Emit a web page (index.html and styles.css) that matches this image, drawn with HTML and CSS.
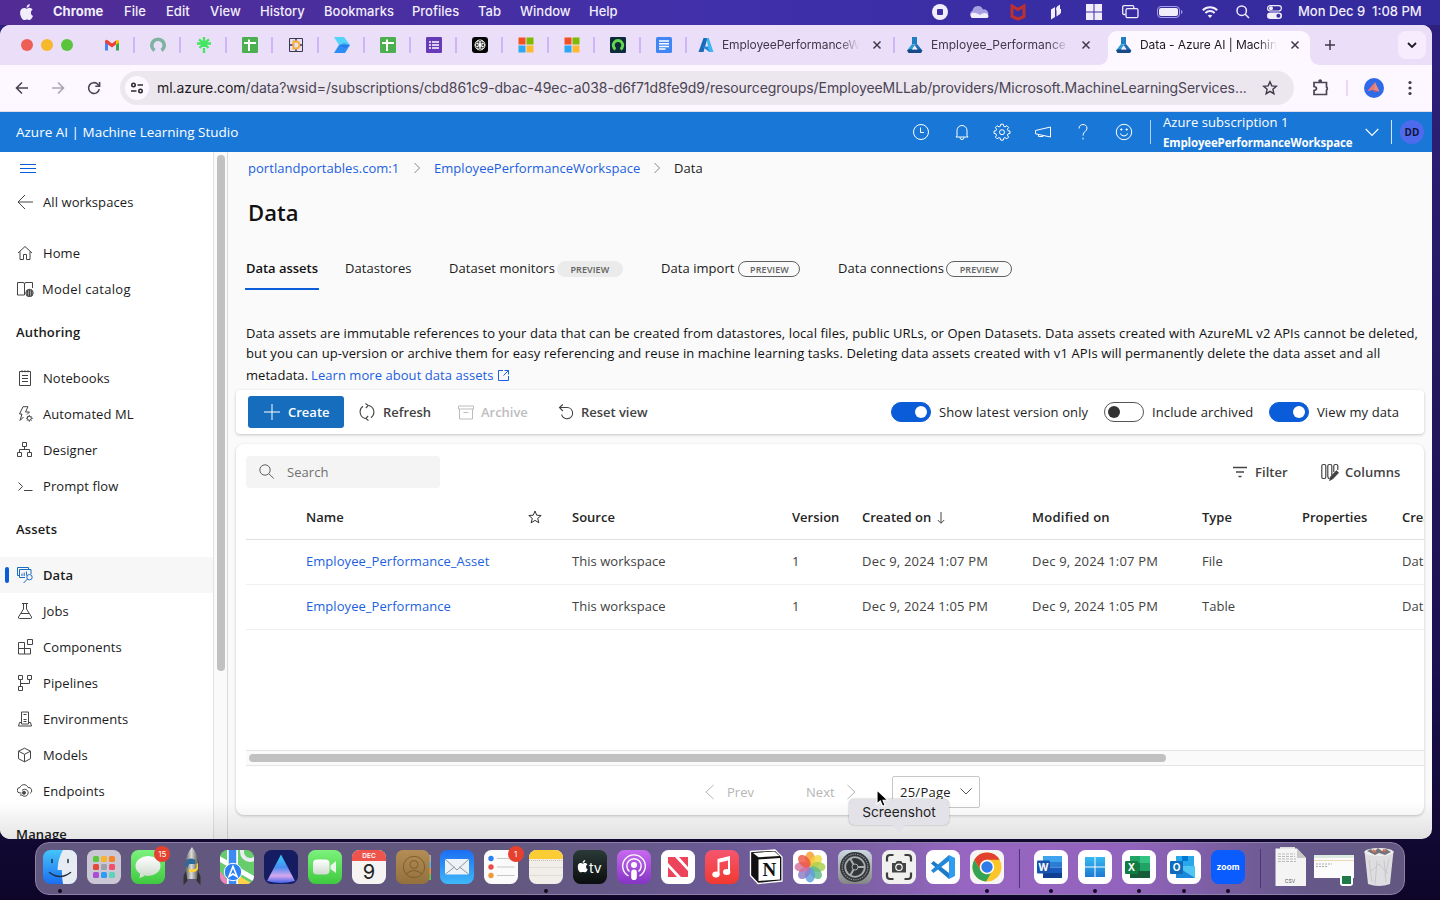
FILE: index.html
```html
<!DOCTYPE html>
<html lang="en">
<head>
<meta charset="utf-8">
<title>Data - Azure AI | Machine Learning Studio</title>
<link rel="stylesheet" href="styles.css">
</head>
<body>
<svg class="defs" width="0" height="0">
  <defs>
    <linearGradient id="gSky" x1="0" y1="0" x2="0" y2="1"><stop offset="0" stop-color="#1b6ef3"/><stop offset="1" stop-color="#3fb8f9"/></linearGradient>
    <linearGradient id="gFinder" x1="0" y1="0" x2="0" y2="1"><stop offset="0" stop-color="#45c4fb"/><stop offset="1" stop-color="#1b6ef0"/></linearGradient>
    <linearGradient id="gGreen" x1="0" y1="0" x2="0" y2="1"><stop offset="0" stop-color="#7cf27c"/><stop offset="1" stop-color="#3fc93f"/></linearGradient>
    <linearGradient id="gPod" x1="0" y1="0" x2="0" y2="1"><stop offset="0" stop-color="#c86af0"/><stop offset="1" stop-color="#8534c4"/></linearGradient>
    <linearGradient id="gMusic" x1="0" y1="0" x2="0" y2="1"><stop offset="0" stop-color="#f5566f"/><stop offset="1" stop-color="#f1392f"/></linearGradient>
    <linearGradient id="gTv" x1="0" y1="0" x2="0" y2="1"><stop offset="0" stop-color="#2a3a37"/><stop offset="1" stop-color="#0a0d0d"/></linearGradient>
    <linearGradient id="gNova" x1="0" y1="0" x2="0" y2="1"><stop offset="0" stop-color="#2fd0fb"/><stop offset=".45" stop-color="#4a8cf2"/><stop offset=".75" stop-color="#d9a8ee"/><stop offset="1" stop-color="#3e62e8"/></linearGradient>
    <linearGradient id="gWhite" x1="0" y1="0" x2="0" y2="1"><stop offset="0" stop-color="#fff"/><stop offset="1" stop-color="#cfdccf"/></linearGradient>
    <linearGradient id="gSettings" x1="0" y1="0" x2="0" y2="1"><stop offset="0" stop-color="#cdd8e2"/><stop offset="1" stop-color="#858585"/></linearGradient>
    <linearGradient id="gBrown" x1="0" y1="0" x2="0" y2="1"><stop offset="0" stop-color="#b38d55"/><stop offset="1" stop-color="#93703c"/></linearGradient>
    <linearGradient id="gRocket" x1="0" y1="0" x2="1" y2="0"><stop offset="0" stop-color="#555"/><stop offset=".45" stop-color="#ddd"/><stop offset="1" stop-color="#444"/></linearGradient>
    <linearGradient id="gAz" x1="0" y1="0" x2="0" y2="1"><stop offset="0" stop-color="#37b9f1"/><stop offset="1" stop-color="#1b7ad3"/></linearGradient>
    <symbol id="apple" viewBox="0 0 14 16"><path d="M9.3 2.7C9.9 2 10.2 1 10.1 0 9.200.1 8.200.6 7.600 1.300 7.100 1.900 6.700 2.900 6.800 3.800 7.800 3.900 8.700 3.400 9.300 2.700ZM10.100 4c-1.300-.1-2.400.8-3.100.8S5.300 4.100 4.200 4.100C2.800 4.100 1.500 4.900.8 6.200c-1.500 2.600-.4 6.400 1 8.400.7 1 1.500 2.100 2.600 2 1-.04 1.400-.7 2.700-.7s1.600.7 2.700.6 1.800-1 2.500-2c.8-1.100 1.100-2.200 1.100-2.300-.02 0-2.200-.8-2.200-3.300 0-2.100 1.700-3 1.800-3.100C12.100 4.300 10.600 4 10.100 4Z" transform="scale(.97)"/></symbol>
    <symbol id="sheet" viewBox="0 0 16 16"><rect width="16" height="16" rx="1.300" fill="#4caf50"/><path d="M7 2.500v11.500M2 6h12" stroke="#fff" stroke-width="2"/></symbol>
    <symbol id="ms" viewBox="0 0 16 16"><path fill="#f25022" d="M.5.5h7v7h-7z"/><path fill="#7fba00" d="M8.500.5h7v7h-7z"/><path fill="#2fa8f2" d="M.5 8.500h7v7h-7z"/><path fill="#ffb92e" d="M8.500 8.500h7v7h-7z"/></symbol>
    <symbol id="flask" viewBox="0 0 16 16"><path d="M5 0h5v7.500H5z" fill="#1f7fc0"/><path d="M5 7l2.800 1.200L3.300 15.500 0 13.500z" fill="#2c9fd8"/><path d="M10 7l5 6-2 2.500L7.300 8z" fill="#1a6fb5"/><path d="M0 13.500 2.500 12.300h10L15.500 13.500 14 16H1.500z" fill="#174a86"/><path d="M7.600 8.800 5 12.600h5.600z" fill="#f3eafa"/></symbol>
    <symbol id="x" viewBox="0 0 10 10"><path d="M1.500 1.500l7 7m0-7l-7 7" stroke="#40394a" stroke-width="1.500" fill="none"/></symbol>
    <symbol id="chev" viewBox="0 0 8 12"><path d="M1.500 1l5 5-5 5" fill="none" stroke="currentColor"/></symbol>
  </defs>
</svg>

<header class="menubar">
  <nav class="menus">
    <svg class="apple-logo" width="14" height="16"><use href="#apple"/></svg>
    <b>Chrome</b><span>File</span><span>Edit</span><span>View</span><span>History</span><span>Bookmarks</span><span>Profiles</span><span>Tab</span><span>Window</span><span>Help</span>
  </nav>
  <div class="status">
    <svg width="16" height="16"><circle cx="8" cy="8" r="8" fill="#f1edfa"/><rect x="5" y="5" width="6" height="6" rx="1" fill="#3c30a4"/></svg>
    <svg width="20" height="14"><path d="M4 13a4 4 0 0 1-.5-7.500A5.500 5.500 0 0 1 14 4.500 4.300 4.300 0 0 1 16 13z" fill="#a69fe0"/><path d="M3 13a3 3 0 0 1 0-5c3-1 6 .5 8 2 2-2 5-3 7.500-1 1.800 2 1 4-1 4z" fill="#f1edfa"/></svg>
    <svg width="16" height="17"><path d="M2 2l6 3.500L14 2v10.500L8 15l-6-2.500z" fill="none" stroke="#bd3030" stroke-width="3"/></svg>
    <svg width="12" height="16"><path d="M1 5.500 5 3v10l-4 2.500zM6.500 3 10 .5V10l-3.500 2.500z" fill="#f1edfa"/><path d="M6 4l5 1v4l-3 2" fill="#f1edfa"/></svg>
    <svg width="16" height="16"><path d="M0 0h7.500v7.500H0zM8.500 0H16v7.500H8.500zM0 8.500h7.500V16H0zM8.500 8.500H16V16H8.500z" fill="#f1edfa"/></svg>
    <svg width="17" height="14" fill="none" stroke="#f1edfa" stroke-width="1.300"><path d="M3.500 9.500H2A1.300 1.300 0 0 1 .7 8.200V2A1.300 1.300 0 0 1 2 .7h8.500A1.300 1.300 0 0 1 11.800 2v1"/><rect x="4" y="3.700" width="12" height="9" rx="1.500"/></svg>
    <svg width="26" height="12"><rect x=".5" y=".5" width="22" height="11" rx="3.500" fill="none" stroke="#a69fe0"/><rect x="2" y="2" width="19" height="8" rx="2" fill="#f1edfa"/><path d="M24 4v4q1.500-.5 1.500-2T24 4" fill="#a69fe0"/></svg>
    <svg width="16" height="12" fill="none" stroke="#f1edfa" stroke-width="2"><path d="M.8 4.300a10.200 10.200 0 0 1 14.400 0M3.400 7a6.500 6.500 0 0 1 9.200 0"/><path d="M8 12 5.700 9.600q2.300-1.800 4.600 0z" fill="#f1edfa" stroke="none"/></svg>
    <svg width="14" height="14" fill="none" stroke="#f1edfa" stroke-width="1.500"><circle cx="5.700" cy="5.700" r="4.700"/><path d="M9.200 9.200 13 13"/></svg>
    <svg width="15" height="14"><rect x=".6" y=".6" width="13.800" height="5.400" rx="2.700" fill="none" stroke="#f1edfa" stroke-width="1.200"/><circle cx="4" cy="3.300" r="2" fill="#f1edfa"/><rect y="7.500" width="15" height="6.500" rx="3.200" fill="#f1edfa"/><circle cx="11.400" cy="10.700" r="2" fill="#3b2fa2"/></svg>
    <span class="clock">Mon Dec 9&nbsp; 1:08 PM</span>
  </div>
</header>

<div class="window">
  <div class="tabstrip">
    <div class="lights"><i class="red"></i><i class="amber"></i><i class="green"></i></div>
    <div class="pins">
      <span><svg width="16" height="16" viewBox="0 0 16 16"><path d="M1 5v8.500h3V6z" fill="#4285f4"/><path d="M12 6v7.500h3V5z" fill="#34a853"/><path d="M1 4.500Q1.500 1.500 4 3.500L8 6.500 12 3.500V7.500L8 10.500 1 5.500z" fill="#ea4335"/><path d="M12 3.500q2.500-2 3 1v1.300L12 8z" fill="#fbbc04"/></svg></span>
      <span><svg width="16" height="16" viewBox="0 0 16 16"><path d="M4.500 13.500A6.200 6.200 0 1 1 11.500 13.500" fill="none" stroke="#7fb3a1" stroke-width="3.600"/></svg></span>
      <span><svg width="16" height="16" viewBox="0 0 16 16"><path d="M8 0v10M3 2.300 8 6.500l5-4.200M1 6.500h14M3.500 11 8 6.500l4.500 4.500M8 11v5" fill="none" stroke="#43e660" stroke-width="2.300"/></svg></span>
      <span><svg width="16" height="16"><use href="#sheet"/></svg></span>
      <span><svg width="16" height="16" viewBox="0 0 16 16"><path d="M1.500 1.500h13v13h-13z" fill="none" stroke="#38384e"/><path d="M5.500 4.500h2.500a3.500 3.500 0 0 1 0 7H5.500z" fill="none" stroke="#f8ae2b" stroke-width="2"/><path d="M8 1v2.500m0 9V15M1 8h3.500m7.500 0h3" stroke="#38384e" stroke-width="1.500"/></svg></span>
      <span><svg width="16" height="16" viewBox="0 0 16 16"><path d="M0 0h10l6 8H5z" fill="#54d3fb"/><path d="M5 8h11l-5 8H0z" fill="#2d8cf5"/><path d="M5 8 10 6l6 2-5 3z" fill="#1d66e8" opacity=".5"/></svg></span>
      <span><svg width="16" height="16"><use href="#sheet"/></svg></span>
      <span><svg width="16" height="16" viewBox="0 0 16 16"><rect width="16" height="16" rx="1.300" fill="#673ab7"/><path d="M3 5h2m1 0h7M3 8h2m1 0h7M3 11h2m1 0h7" stroke="#fff" stroke-width="1.700"/></svg></span>
      <span><svg width="16" height="16" viewBox="0 0 16 16"><rect width="16" height="16" rx="3" fill="#050505"/><g fill="none" stroke="#fff" stroke-width=".8"><ellipse cx="8" cy="5.500" rx="3" ry="2.700"/><ellipse cx="8" cy="5.500" rx="3" ry="2.700" transform="rotate(60 8 8)"/><ellipse cx="8" cy="5.500" rx="3" ry="2.700" transform="rotate(120 8 8)"/><ellipse cx="8" cy="5.500" rx="3" ry="2.700" transform="rotate(180 8 8)"/><ellipse cx="8" cy="5.500" rx="3" ry="2.700" transform="rotate(240 8 8)"/><ellipse cx="8" cy="5.500" rx="3" ry="2.700" transform="rotate(300 8 8)"/></g></svg></span>
      <span><svg width="16" height="16"><use href="#ms"/></svg></span>
      <span><svg width="16" height="16"><use href="#ms"/></svg></span>
      <span><svg width="16" height="16" viewBox="0 0 16 16"><rect width="16" height="16" rx="1.300" fill="#0d2b3a"/><path d="M5.500 12.200A4.700 4.700 0 1 1 10.500 12.200" fill="none" stroke="#62d84e" stroke-width="2.900"/></svg></span>
      <span><svg width="16" height="16" viewBox="0 0 16 16"><rect width="16" height="16" rx="1.500" fill="#4285f4"/><path d="M3 4h10M3 6.700h10M3 9.400h10M3 12h6.500" stroke="#fff" stroke-width="1.500"/></svg></span>
    </div>
    <div class="tab t1"><svg width="16" height="16" viewBox="0 0 16 16"><path d="M5.500 1h4L5.500 15H.5z" fill="#176bb8"/><path d="M8.500 1h2.200L15.500 15H11z" fill="#3bb7ef"/><path d="M4 9.500h6l1.500 5.500z" fill="#2485d8"/></svg><span>EmployeePerformanceW</span><svg width="10" height="10"><use href="#x"/></svg></div>
    <div class="tab t2"><svg width="16" height="16"><use href="#flask"/></svg><span>Employee_Performance</span><svg width="10" height="10"><use href="#x"/></svg></div>
    <div class="tab active"><svg width="16" height="16"><use href="#flask"/></svg><span>Data - Azure AI | Machin</span><svg width="10" height="10"><use href="#x"/></svg></div>
    <svg class="plus" width="12" height="12"><path d="M6 1v10M1 6h10" stroke="#40394a" stroke-width="1.500"/></svg>
    <div class="tabmenu"><svg width="10" height="6"><path d="M1 1l4 4 4-4" fill="none" stroke="#1d1b20" stroke-width="1.800"/></svg></div>
  </div>

  <div class="addressbar">
    <svg class="nav-back" width="14" height="14" fill="none" stroke="#4a4453" stroke-width="1.600"><path d="M13 7H2M7 1.500 1.500 7 7 12.500"/></svg>
    <svg class="nav-fwd" width="14" height="14" fill="none" stroke="#aaa5b0" stroke-width="1.600"><path d="M1 7h11M7 1.500 12.500 7 7 12.500"/></svg>
    <svg class="nav-reload" width="14" height="14" fill="none" stroke="#4a4453" stroke-width="1.600"><path d="M12.300 8.200A5.400 5.400 0 1 1 10.800 3.200L12.500 5"/><path d="M12.600 1v4.300H8.300"/></svg>
    <div class="url">
      <span class="siteinfo"><svg width="14" height="12" fill="none" stroke="#2c2931" stroke-width="1.600"><circle cx="3.500" cy="3" r="1.700"/><path d="M7.500 3H13M1 9h5.500"/><circle cx="10.500" cy="9" r="1.700"/></svg></span>
      <span class="address"><em>ml.azure.com</em>/data?wsid=/subscriptions/cbd861c9-dbac-49ec-a038-d6f71d8fe9d9/resourcegroups/EmployeeMLLab/providers/Microsoft.MachineLearningServices...</span>
      <svg class="bookmark" width="16" height="16" fill="none" stroke="#40394a" stroke-width="1.400"><path d="M8 1.800l1.800 4.100 4.500.4-3.400 3 1 4.400L8 11.400l-3.900 2.300 1-4.400-3.400-3 4.500-.4z"/></svg>
    </div>
    <svg class="ext" width="18" height="18" fill="none" stroke="#4a4453" stroke-width="1.700"><path d="M2 3.500h12.500V8a2 2 0 0 1 0 3.200v4.300H2v-4q2.500-.5 2.500-2T2 7.500z"/><circle cx="8.200" cy="2" r="1" fill="#4a4453"/></svg>
    <i class="vbar"></i>
    <svg class="avatar" width="20" height="20"><circle cx="10" cy="10" r="10" fill="#2f6ae8"/><path d="M11 4 9 12 3.500 13z" fill="#f2756f"/><path d="M11 4 15.500 13.500 9 12z" fill="#e88a80"/><path d="M9 12l6.500 1.500-5.500.5z" fill="#c95a66"/></svg>
    <svg class="kebab" width="4" height="16" fill="#40394a"><circle cx="2" cy="2.500" r="1.600"/><circle cx="2" cy="8" r="1.600"/><circle cx="2" cy="13.500" r="1.600"/></svg>
  </div>

  <div class="azure-header">
    <span class="brand">Azure AI | Machine Learning Studio</span>
    <div class="tools">
      <svg width="18" height="18"><circle cx="9" cy="9" r="7.500"/><path d="M8.500 4.500v5H12"/></svg>
      <svg width="18" height="18"><path d="M4 12.500V7.500a5 5 0 0 1 10 0v5l1 1.500H3zM7 14.500a2 2 0 0 0 4 0"/></svg>
      <svg width="18" height="18"><path d="M7.800 1.200h2.400l.5 2.100 1.300.6 1.900-1.200 1.700 1.700-1.200 1.900.6 1.400 2 .4v2.300l-2 .5-.6 1.300 1.200 1.900-1.700 1.700-1.900-1.200-1.300.6-.5 2H7.800l-.5-2-1.300-.6-1.900 1.200-1.700-1.700 1.200-1.900-.6-1.300-2-.5V8.100l2-.4.6-1.400L2.400 4.400l1.700-1.700L6 3.900l1.300-.6z"/><circle cx="9" cy="9.200" r="2.500"/></svg>
      <svg width="18" height="18"><path d="M1.500 7.500 16.500 4v10L1.500 10.800zM4.500 11.500v2h4.500v-1"/></svg>
      <svg width="18" height="18"><path d="M5 5.500C5 3 6.800 1.500 9 1.500s4 1.500 4 3.600C13 8.500 9 8.500 9 12.500M9 14.700V16.500"/></svg>
      <svg width="18" height="18"><circle cx="9" cy="9" r="7.700"/><path d="M5 10.500q4 5 8 0"/><circle cx="6.300" cy="6.500" r=".7" fill="#fff"/><circle cx="11.700" cy="6.500" r=".7" fill="#fff"/></svg>
    </div>
    <div class="workspace"><span>Azure subscription 1</span><b>EmployeePerformanceWorkspace</b></div>
    <svg class="ws-chev" width="14" height="9" fill="none" stroke="#fff" stroke-width="1.100"><path d="M.7 1 7 7.500 13.300 1"/></svg>
    <div class="user"><span>DD</span></div>
  </div>

  <div class="body">
    <aside class="sidebar">
      <svg class="burger" width="16" height="11"><path d="M0 1.500h16M0 5.500h16M0 9.500h16" stroke="#0b5cd8"/></svg>
      <a class="item"><svg viewBox="0 0 16 16"><path d="M16 8H1M8 1 1 8l7 7"/></svg>All workspaces</a>
      <div class="gap"></div>
      <a class="item"><svg viewBox="0 0 16 16"><path d="M1 8 8 1.500 15 8M3 6.500V14.500H6.500V9.500h3v5H13V6.500"/></svg>Home</a>
      <a class="item catalog"><svg viewBox="0 0 17 16"><path d="M7.500 14H.5V1.500H6q1.500 0 1.500 1.500 0-1.500 1.500-1.500h6.500V7M7.500 3v11"/><circle cx="12.500" cy="12" r="3.700"/><path d="M8.800 12h7.400M12.500 8.300v7.400M11 8.500q-1.500 3.500 0 7M14 8.500q1.500 3.500 0 7M9.500 10h6M9.500 14h6"/></svg>Model catalog</a>
      <h4>Authoring</h4>
      <a class="item"><svg viewBox="0 0 16 16"><path d="M2.500 1.500h11v14h-11zM5 .3v2M8 .3v2M11 .3v2M5 5.500h6M5 8.500h6M5 11.500h6"/></svg>Notebooks</a>
      <a class="item"><svg viewBox="0 0 16 16"><path d="M6 .7h5L8.500 6h4L10 8.500M6 .7 2.500 8H5l-2 6.500 3.500-3.500"/><circle cx="12.300" cy="12.300" r="2"/><path d="M12.300 9v1.300m0 4v1.500M9 12.300h1.300m4 0h1.500M10 10l.8.800m3 3 .8.800m0-4.600-.8.800m-3 3-.8.800"/></svg>Automated ML</a>
      <a class="item"><svg viewBox="0 0 16 16"><path d="M5.500.5h4v4h-4zM.5 10.500h4v4h-4zM10.500 10.500h4v4h-4zM7.500 4.500v3M2.500 10.500v-3h10v3"/></svg>Designer</a>
      <a class="item"><svg viewBox="0 0 16 16"><path d="M1.500 4.500l4 4-4 4M7 12.500h8.500"/></svg>Prompt flow</a>
      <h4>Assets</h4>
      <a class="item current"><svg viewBox="0 0 16 16"><path d="M8 10.500H2.500v-8H14V7M2.500 8.500h-2V.5h11v2M5 9V6.500M7.200 9V5.500M9.500 8.500V4.500"/><circle cx="12.500" cy="10.200" r="2.700"/><path d="M10.500 12l-4 4"/></svg><span>Data</span></a>
      <a class="item"><svg viewBox="0 0 16 16"><path d="M5 .5h6M6.500.5V6L1.500 14q-.5 1.500 1 1.500h11q1.500 0 1-1.500L9.500 6V.5M4 10.500h8"/></svg>Jobs</a>
      <a class="item"><svg viewBox="0 0 16 16"><path d="M1.500 3.500h6v6h-6zM1.500 9.500h6v5.500h-6zM7.500 9.500h6v5.500h-6zM10.500.5h5v5h-5z"/></svg>Components</a>
      <a class="item"><svg viewBox="0 0 16 16"><path d="M1.500.5h4v4h-4zM10.500.5h4v4h-4zM1.500 11.500h4v4h-4zM3.500 4.500v7M3.500 8.500h9v-4"/></svg>Pipelines</a>
      <a class="item"><svg viewBox="0 0 16 16"><path d="M4.500 1h7v12h-7zM4.500 11.500h-2L1.500 15h13l-1-3.500h-2M6.500 3.500h3M6.500 8.500h3M6.500 10.500h3"/></svg>Environments</a>
      <a class="item"><svg viewBox="0 0 16 16"><path d="M7.500 1.200l6 3v7.500l-6 3.100-6-3.100V4.200zM1.500 4.200l6 3.100 6-3.100M7.500 7.300v7.500"/></svg>Models</a>
      <a class="item"><svg viewBox="0 0 16 16"><path d="M4.500 10H3a2.600 2.600 0 0 1 0-5.500C4 1 9.500.5 11 4.500a3.200 3.200 0 0 1 2 6"/><path d="M5 7.500a3.500 3.500 0 1 1 0 4.500H3"/><circle cx="7" cy="9.700" r="1.500" fill="#444"/></svg>Endpoints</a>
      <h4>Manage</h4>
    </aside>
    <div class="vscroll"><i></i></div>

    <main>
      <div class="crumbs"><a>portlandportables.com:1</a><svg width="8" height="12"><use href="#chev"/></svg><a class="c2">EmployeePerformanceWorkspace</a><svg width="8" height="12"><use href="#chev"/></svg><span>Data</span></div>
      <h1>Data</h1>
      <div class="pivots">
        <span class="pivot on">Data assets</span>
        <span class="pivot">Datastores</span>
        <span class="pivot">Dataset monitors<i class="pill grey">PREVIEW</i></span>
        <span class="pivot">Data import<i class="pill">PREVIEW</i></span>
        <span class="pivot">Data connections<i class="pill wide">PREVIEW</i></span>
      </div>
      <div class="desc">
        <div class="l1">Data assets are immutable references to your data that can be created from datastores, local files, public URLs, or Open Datasets. Data assets created with AzureML v2 APIs cannot be deleted,</div>
        <div class="l2">but you can up-version or archive them for easy referencing and reuse in machine learning tasks. Deleting data assets created with v1 APIs will permanently delete the data asset and all</div>
        <div class="l3">metadata. <a>Learn more about data assets</a><svg width="11" height="11"><path d="M5 .5H.5v10h10V6M6.500.5h4v4M10.400.6 5.500 5.500" fill="none" stroke="#1c5fe0"/></svg></div>
      </div>

      <section class="commands">
        <button class="create"><svg width="16" height="16"><path d="M8 0v16M0 8h16" stroke="#fff"/></svg>Create</button>
        <span class="cmd refresh"><svg width="16" height="18" fill="none" stroke="#444" stroke-width="1.100"><path d="M6 15.500A6.900 6.900 0 0 1 4 3.300M10 2.500A6.900 6.900 0 0 1 12 14.700M6.500.5 9.300 2.500 6.800 5M9.500 17.500 6.700 15.500 9.200 13"/></svg>Refresh</span>
        <span class="cmd archive"><svg width="16" height="15" fill="none" stroke="#bdbdbd"><path d="M.5 1h15v3H.5zM1.500 4v10h13V4M5.500 7.500h5"/></svg>Archive</span>
        <span class="cmd reset"><svg width="16" height="16" fill="none" stroke="#444" stroke-width="1.100"><path d="M2 3.500H9.200a5.600 5.600 0 1 1-5.600 7M4.800.5 1.500 3.500 4.800 7"/></svg>Reset view</span>
        <span class="toggles">
          <i class="toggle checked"></i><span class="g1">Show latest version only</span>
          <i class="toggle"></i><span class="g2">Include archived</span>
          <i class="toggle checked"></i><span>View my data</span>
        </span>
      </section>

      <section class="grid">
        <div class="gridtop">
          <div class="search"><svg width="16" height="16" fill="none" stroke="#616161"><circle cx="6" cy="6" r="5.200"/><path d="M9.800 9.800l5 4.700"/></svg>Search</div>
          <span class="filter"><svg width="14" height="12" stroke="#444" stroke-width="1.300"><path d="M0 1.500h14M3 6h8M5.500 10.500h3"/></svg>Filter</span>
          <span class="columns"><svg width="18" height="18" fill="none" stroke="#444" stroke-width="1.200"><rect x=".8" y="1.500" width="4" height="14" rx="1.500"/><path d="M6.800 13V3q0-1.500 1.500-1.500h1Q10.800 1.500 10.800 3v9M6.800 13q0 2.500 2 2.500M12.800 9V3q0-1.500 1.500-1.500h1Q16.800 1.500 16.800 3v4"/><path d="M9 17l1-3.500 5.500-5.500 1.700 1.700-5.500 5.800z" fill="#444"/></svg>Columns</span>
        </div>
        <div class="scroller">
          <div class="row head"><span>Name</span><span><svg width="14" height="14" fill="none" stroke="#333"><path d="M7 1l1.700 4.200 4.500.3-3.500 2.900 1.200 4.400L7 10.400l-3.900 2.400 1.200-4.400L.8 5.500l4.500-.3z"/></svg></span><span>Source</span><span>Version</span><span>Created on<svg class="sort" width="8" height="12" fill="none" stroke="#444"><path d="M4 0v11M.8 8 4 11.300 7.200 8"/></svg></span><span class="mod">Modified on</span><span>Type</span><span>Properties</span><span>Created by</span></div>
          <div class="row"><a>Employee_Performance_Asset</a><span></span><span>This workspace</span><span>1</span><span class="date">Dec 9, 2024 1:07 PM</span><span class="date">Dec 9, 2024 1:07 PM</span><span>File</span><span></span><span>Data Dev</span></div>
          <div class="row"><a>Employee_Performance</a><span></span><span>This workspace</span><span>1</span><span class="date">Dec 9, 2024 1:05 PM</span><span class="date">Dec 9, 2024 1:05 PM</span><span>Table</span><span></span><span>Data Dev</span></div>
        </div>
        <div class="hscroll"><i></i></div>
        <div class="pager">
          <span class="prev"><svg width="9" height="16" fill="none" stroke="#b5b5b5"><path d="M8.500 1 1 8l7.500 7"/></svg>Prev</span>
          <span class="next">Next<svg width="9" height="16" fill="none" stroke="#b5b5b5"><path d="M.5 1 8 8 .5 15"/></svg></span>
          <span class="select">25/Page<svg width="12" height="7" fill="none" stroke="#555"><path d="M.5.5 6 6 11.500.5"/></svg></span>
        </div>
      </section>
    </main>
  </div>
</div>

<div class="tip">Screenshot</div>
<svg class="cursor" width="13" height="19"><path d="M1 1v14l3.300-3 2.300 5.200 2.500-1L7 11.200h4.700z" fill="#000" stroke="#fff" stroke-width="1.100"/></svg>

<footer class="dock">
  <span class="app run"><svg viewBox="0 0 34 34"><rect width="34" height="34" rx="7.500" fill="url(#gFinder)"/><path d="M20 0h6.500A7.500 7.500 0 0 1 34 7.500v19a7.500 7.500 0 0 1-7.500 7.500H20q-1-6-1.200-14H14.500Q15 8 20 0z" fill="#e7ecf3"/><path d="M9 9.500v3M25 9.500v3M6.500 22.500q10.500 8 21 0" fill="none" stroke="#1d3043" stroke-width="1.500" stroke-linecap="round"/></svg></span>
  <span class="app"><svg viewBox="0 0 34 34"><rect width="34" height="34" rx="7.500" fill="#cbc8d6"/><g><rect x="6" y="6" width="6" height="6" rx="1.500" fill="#5bc73b"/><rect x="14" y="6" width="6" height="6" rx="1.500" fill="#f7b32b"/><rect x="22" y="6" width="6" height="6" rx="1.500" fill="#f58527"/><rect x="6" y="14" width="6" height="6" rx="1.500" fill="#e6473d"/><rect x="14" y="14" width="6" height="6" rx="1.500" fill="#9aa1aa"/><rect x="22" y="14" width="6" height="6" rx="1.500" fill="#f0506c"/><rect x="6" y="22" width="6" height="6" rx="1.500" fill="#a94fd4"/><rect x="14" y="22" width="6" height="6" rx="1.500" fill="#2e9bf5"/><rect x="22" y="22" width="6" height="6" rx="1.500" fill="#5fd3b5"/></g></svg></span>
  <span class="app"><svg viewBox="0 0 34 34"><rect width="34" height="34" rx="7.500" fill="url(#gGreen)"/><ellipse cx="17" cy="16" rx="12.500" ry="10" fill="url(#gWhite)"/><path d="M9 23q.5 3-1 5 4-.5 6-3z" fill="#d5e2d5"/></svg><b class="badge">15</b></span>
  <span class="app"><svg viewBox="0 0 34 40" class="tall"><path d="M17 0q7 9 7 18 0 8-2 14H12q-2-6-2-14 0-9 7-18z" fill="url(#gRocket)"/><path d="M11 24l-2.500 5v9l4-4h9l4 4v-9L23 24l-1.500 10h-9z" fill="#333"/><path d="M11 13q6-3 9.500 0v4H15q-2 0-2 4l-3-2z" fill="#306998"/><path d="M23 16v6q-2 4-9 3v-3h6q1.500 0 1.500-2v-3z" fill="#ffd43b"/></svg></span>
  <span class="app"><svg viewBox="0 0 34 34"><clipPath id="cm"><rect width="34" height="34" rx="7.500"/></clipPath><g clip-path="url(#cm)"><path fill="#67cc6b" d="M0 0h34v34H0z"/><path d="M16 24l20 12H14z" fill="#ffd24a"/><path d="M0 21l10 13H0z" fill="#f182c2"/><path d="M-2 8 36 30" stroke="#fff" stroke-width="5"/><path d="M12.500 0v34" stroke="#fff" stroke-width="11"/><path d="M12.500 0v34" stroke="#3b8bf3" stroke-width="7.500"/><circle cx="30" cy="2" r="8" fill="none" stroke="#e9edf0" stroke-width="4"/><circle cx="13" cy="22" r="8.700" fill="#2b80f5" stroke="#fff"/><path d="M13 16.500l4 10-4-2.500-4 2.500z" fill="none" stroke="#fff" stroke-width="1.600"/></g></svg></span>
  <span class="app"><svg viewBox="0 0 34 34"><rect width="34" height="34" rx="7.500" fill="#151c61"/><path d="M17 4.500 31 31q-14 4-28 0z" fill="url(#gNova)"/></svg></span>
  <span class="app"><svg viewBox="0 0 34 34"><rect width="34" height="34" rx="7.500" fill="url(#gGreen)"/><rect x="5" y="9.500" width="16.500" height="15" rx="4" fill="url(#gWhite)"/><path d="M22.500 15.500 28 11v12l-5.500-4z" fill="#eaf6ea"/></svg></span>
  <span class="app"><svg viewBox="0 0 34 34"><rect width="34" height="34" rx="7.500" fill="#f6f4f3"/><path d="M0 11V7.500A7.500 7.500 0 0 1 7.500 0h19A7.500 7.500 0 0 1 34 7.500V11z" fill="#ee534c"/><text x="17" y="8.300" class="cal-m">DEC</text><text x="17" y="28.500" class="cal-d">9</text></svg></span>
  <span class="app"><svg viewBox="0 0 34 34"><path d="M32 5h3v7h-3z" fill="#aaa"/><path d="M32 12h3v6h-3z" fill="#52b5e6"/><path d="M32 18h3v6h-3z" fill="#e8923d"/><path d="M32 24h3v6h-3z" fill="#5ac552"/><rect width="33.500" height="34" rx="7" fill="url(#gBrown)"/><g fill="none" stroke="#7d5e2e" stroke-width="1"><circle cx="18" cy="17" r="10.700"/><circle cx="18" cy="14.500" r="4"/><path d="M10 24q8-7 16 0"/></g></svg></span>
  <span class="app"><svg viewBox="0 0 34 34"><rect width="34" height="34" rx="7.500" fill="url(#gSky)"/><rect x="5" y="9" width="24" height="15.500" rx="1.500" fill="#eef1f5"/><path d="M5.500 9.500 17 20 28.500 9.500M5.500 24l9-7M28.500 24l-9-7" fill="none" stroke="#8e979f"/></svg></span>
  <span class="app"><svg viewBox="0 0 34 34"><rect width="34" height="34" rx="7.500" fill="#fbfbfb"/><path d="M13 8.500h17.500M13 17h17.500M13 25.500h17.500" stroke="#c7c7c9"/><circle cx="7" cy="8.500" r="2.700" fill="#2b80f5"/><circle cx="7" cy="17" r="2.700" fill="#ea4d45"/><circle cx="7" cy="25.500" r="2.700" fill="#f09a37"/></svg><b class="badge">1</b></span>
  <span class="app run"><svg viewBox="0 0 34 34"><rect width="34" height="34" rx="7.500" fill="#f1eeea"/><path d="M0 9V7.500A7.500 7.500 0 0 1 7.500 0h19A7.500 7.500 0 0 1 34 7.500V9z" fill="#fbcd34"/><path d="M0 10.500h34" stroke="#c5c0b5" stroke-dasharray="1 1"/><path d="M0 17.500h34M0 25.500h34" stroke="#dcd8d3" stroke-width=".8"/></svg></span>
  <span class="app"><svg viewBox="0 0 34 34"><rect width="34" height="34" rx="7.500" fill="url(#gTv)"/><use href="#apple" x="4.500" y="10" width="11" height="12.500" fill="#fff"/><text x="16" y="22.500" class="tv">tv</text></svg></span>
  <span class="app"><svg viewBox="0 0 34 34"><rect width="34" height="34" rx="7.500" fill="url(#gPod)"/><g fill="none" stroke="#fff" stroke-width="1.400"><path d="M11.500 26a11.300 11.300 0 1 1 11 0M12.500 21.500a7.200 7.200 0 1 1 9 0"/></g><circle cx="17" cy="15" r="3" fill="#fff"/><rect x="14.200" y="19.500" width="5.600" height="10.500" rx="2.800" fill="#fff"/></svg></span>
  <span class="app"><svg viewBox="0 0 34 34"><rect width="34" height="34" rx="7.500" fill="#fff"/><path d="M7 7h7l13 14v6h-7L7 13zM18 7h9v10zM7 17l9 10H7z" fill="#ec445a"/></svg></span>
  <span class="app"><svg viewBox="0 0 34 34"><rect width="34" height="34" rx="7.500" fill="url(#gMusic)"/><path d="M12.500 9 25 6v4l-10.500 2.500V24h-2zM23 8h2v13h-2z" fill="#fff"/><ellipse cx="11" cy="24.500" rx="3.700" ry="3" fill="#fff"/><ellipse cx="21.700" cy="22" rx="3.700" ry="3" fill="#fff"/></svg></span>
  <span class="app"><svg viewBox="0 0 34 34"><path d="M1.500 1.500 26 0l7 7v24L9 33.500l-7.500-8z" fill="#111" stroke="#fff" stroke-width="1.300" stroke-linejoin="round"/><path d="M4 3 25.500 1.500l5 4.500-21 1.300z" fill="#fff"/><path d="M9.500 9.500 31 8v21.500L9.500 31z" fill="#fff"/><text x="20.300" y="26" class="notion">N</text></svg></span>
  <span class="app"><svg viewBox="0 0 34 34"><rect width="34" height="34" rx="7.500" fill="#fff"/><g fill-opacity=".82"><ellipse cx="17" cy="9" rx="5" ry="7.500" fill="#f69b2c"/><ellipse cx="17" cy="9" rx="5" ry="7.500" fill="#f2d53c" transform="rotate(45 17 17)"/><ellipse cx="17" cy="9" rx="5" ry="7.500" fill="#a8ce4a" transform="rotate(90 17 17)"/><ellipse cx="17" cy="9" rx="5" ry="7.500" fill="#5db98a" transform="rotate(135 17 17)"/><ellipse cx="17" cy="9" rx="5" ry="7.500" fill="#5a9fdb" transform="rotate(180 17 17)"/><ellipse cx="17" cy="9" rx="5" ry="7.500" fill="#8a7bc6" transform="rotate(225 17 17)"/><ellipse cx="17" cy="9" rx="5" ry="7.500" fill="#d3719f" transform="rotate(270 17 17)"/><ellipse cx="17" cy="9" rx="5" ry="7.500" fill="#ee5744" transform="rotate(315 17 17)"/></g></svg></span>
  <span class="app"><svg viewBox="0 0 34 34"><rect width="34" height="34" rx="7.500" fill="url(#gSettings)"/><circle cx="17" cy="17" r="15" fill="#33373a"/><circle cx="17" cy="17" r="12.800" fill="none" stroke="#8d9194" stroke-width="1.200" stroke-dasharray="1.300 1"/><circle cx="17" cy="17" r="9.800" fill="none" stroke="#a9adb0" stroke-width="1.800"/><path d="M17 17H27M17 17l-5-8.700M17 17l-5 8.700" stroke="#a9adb0" stroke-width="2"/><circle cx="17" cy="17" r="3" fill="#33373a" stroke="#a9adb0"/></svg></span>
  <span class="app"><svg viewBox="0 0 34 34"><rect width="34" height="34" rx="7.500" fill="#f0f0ee"/><g fill="none" stroke="#3c3c3c" stroke-width="2.200"><path d="M5 11.500V8q0-3 3-3h3.500M22.500 5H26q3 0 3 3v3.500M29 22.500V26q0 3-3 3h-3.500M11.500 29H8q-3 0-3-3v-3.500"/></g><path d="M10 13h3.500l1.300-2h4.400l1.300 2H24v9.500H10z" fill="#444"/><circle cx="17" cy="17.300" r="3.200" fill="#444" stroke="#fff" stroke-width="1.200"/></svg></span>
  <span class="app"><svg viewBox="0 0 34 34"><rect width="34" height="34" rx="7.500" fill="#fff"/><path d="M23 5l6 3v18l-6 3z" fill="#2f9cf0"/><path d="M5 13.500 7.500 11 23 23v6z" fill="#1a7cc9"/><path d="M5 20.500 7.500 23 23 11V5z" fill="#2488d8"/></svg></span>
  <span class="app run"><svg viewBox="0 0 34 34"><rect width="34" height="34" rx="7.500" fill="#f5f5f5"/><circle cx="17" cy="17" r="14.500" fill="#fbc52c"/><path d="M4.400 9.700A14.500 14.500 0 0 1 29.600 9.700H17A7.300 7.300 0 0 0 10.700 20.700z" fill="#e2412f"/><path d="M4.400 9.700 10.700 20.700A7.300 7.300 0 0 0 21 23.100L16 31.500A14.500 14.500 0 0 1 4.400 9.700z" fill="#33a455"/><circle cx="17" cy="17" r="7.200" fill="#fff"/><circle cx="17" cy="17" r="5.700" fill="#2f7bea"/></svg></span>
  <i class="dock-sep"></i>
  <span class="app run"><svg viewBox="0 0 34 34"><rect width="34" height="34" rx="7.500" fill="#fff"/><path d="M9 6h19v6H9z" fill="#3fa3ee"/><path d="M9 12h19v5.500H9z" fill="#2b7cd3"/><path d="M9 17.500h19V23H9z" fill="#185abd"/><path d="M9 23h19v5H9z" fill="#103f91"/><rect x="3" y="10.500" width="13" height="13" rx="1" fill="#1553ad"/><text x="9.500" y="20.500" class="letter">W</text></svg></span>
  <span class="app run"><svg viewBox="0 0 34 34"><rect width="34" height="34" rx="7.500" fill="#fff"/><path d="M7 7h9.500v9.500H7zM17.500 7H27v9.500h-9.500zM7 17.500h9.500V27H7zM17.500 17.500H27V27h-9.500z" fill="url(#gAz)"/></svg></span>
  <span class="app run"><svg viewBox="0 0 34 34"><rect width="34" height="34" rx="7.500" fill="#fff"/><path d="M8 6h20v22H8z" fill="#21a366"/><path d="M18 6h10v7H18z" fill="#33c481"/><path d="M8 13h10v8H8z" fill="#107c41"/><path d="M8 21h20v7H8z" fill="#185c37"/><rect x="3" y="11" width="13" height="13" rx="1" fill="#107c41"/><text x="9.500" y="21" class="letter">X</text></svg></span>
  <span class="app run"><svg viewBox="0 0 34 34"><rect width="34" height="34" rx="7.500" fill="#fff"/><path d="M9 6h18v10H9z" fill="#28a8ea"/><path d="M15 6h6v5h-6z" fill="#0078d4"/><path d="M9 16h19v12H9z" fill="#1b87d8"/><path d="M9 16l19 12V16z" fill="#50c5f3"/><rect x="3" y="11" width="13" height="13" rx="1" fill="#0f6cbd"/><text x="9.500" y="21" class="letter">O</text></svg></span>
  <span class="app run"><svg viewBox="0 0 34 34"><rect width="34" height="34" rx="7.500" fill="#0b5cff"/><text x="17" y="19.500" class="zoom">zoom</text></svg></span>
  <i class="dock-sep second"></i>
  <span class="app"><svg viewBox="0 0 34 40" class="tall"><path d="M6 0h15v5H6z" fill="#ddd"/><path d="M1.500 1.500H23L32 11v28H1.500z" fill="#f4f4f4"/><path d="M23 1.500V11h9z" fill="#c9c9c9"/><path d="M4 7h17M4 9.500h17M4 12h18M4 14.500h18" stroke="#bbb" stroke-dasharray="3 1"/><text x="16" y="35.500" class="csv">CSV</text></svg></span>
  <span class="app"><svg viewBox="0 0 42 34" class="wide"><path d="M1 5h40v23H1z" fill="#fbfbfb"/><path d="M1 5h40v3H1z" fill="#dcebe0"/><path d="M1 10.500h40" stroke="#ead9b5"/><path d="M3 14h16M3 16.500h12" stroke="#aaa" stroke-dasharray="2 1"/><rect x="27" y="24" width="13" height="12" rx="3" fill="#fff"/><rect x="29" y="26" width="9" height="8" fill="#1f7a49"/></svg></span>
  <span class="app"><svg viewBox="0 0 34 40" class="tall"><path d="M2.500 4h29l-3.500 33q-11 4-22 0z" fill="#dedee0"/><path d="M7 13l3 22M15 14l-2 23M22 13l2 22M27 12l-4 18M8 25l9-8 9 10" stroke="#c8c8cd" fill="none"/><ellipse cx="17" cy="5" rx="14.500" ry="4" fill="#eee"/><path d="M5 4l4-2 3 3 4-4 4 3 4-2 5 3-6 3-6-2-4 2z" fill="#77737c"/><path d="M11 3l3 2M21 3l3 1" stroke="#da7043" stroke-width="2"/></svg></span>
</footer>
</body>
</html>
```
FILE: styles.css
```css
* { box-sizing: border-box; }
body {
  margin: 0; width: 1440px; height: 900px; overflow: hidden;
  font-family: "Open Sans", "Noto Sans", sans-serif; font-size: 13px; color: #242424;
  background: linear-gradient(180deg, #2e2180 0, #241860 40%, #1b1050 75%, #0e0629 100%);
  position: relative;
}
.defs { position: absolute; }
svg { display: block; flex: none; }
i, em { font-style: normal; }

/* macOS menu bar */
.menubar {
  height: 25px; display: flex; justify-content: space-between; align-items: flex-start;
  background: linear-gradient(90deg, #522c94 0, #4a2fa0 25%, #4030aa 50%, #382da2 75%, #332a9c 100%);
  font: 500 13px/23px Inter, sans-serif; color: #f1edfa; white-space: nowrap;
}
.menus { display: grid; grid-template-columns: 33px 71px 42px 44px 50px 64px 88px 66px 42px 69px 40px; padding-left: 20px; align-items: center; height: 23px; }
.menus b { font-weight: 700; }
.apple-logo { fill: #f1edfa; }
.status { display: grid; grid-template-columns: 39px 39px 39px 37px 39px 35px 43px 37px 29px 35px 148px; justify-items: center; align-items: center; width: 520px; height: 24px; }
.clock { justify-self: start; margin-left: 6px; margin-top: -1px; }

/* Browser window */
.window {
  position: relative; width: 1432px; height: 814px; border-radius: 10px; overflow: hidden;
  background: #fafafa; display: flex; flex-direction: column;
}
.window::after {
  content: ""; position: absolute; left: 0; right: 0; bottom: 0; height: 38px; pointer-events: none;
  background: linear-gradient(180deg, transparent, rgba(0,0,0,.1));
}
.tabstrip { height: 40px; background: #ebdef8; display: flex; align-items: center; font: 400 12px Inter, sans-serif; color: #40394a; flex: none; }
.lights { display: flex; gap: 8px; width: 89px; padding-left: 21px; }
.lights i { width: 12px; height: 12px; border-radius: 50%; }
.red { background: #ed5f56; } .amber { background: #f6b82d; } .green { background: #5ac43c; }
.pins { display: flex; }
.pins span { width: 46px; height: 16px; display: flex; justify-content: center; border-right: 2px solid #cfb4f8; }
.pins svg { margin-left: 1px; }
.tab { height: 34px; align-self: flex-end; display: flex; align-items: center; padding-bottom: 6px; padding-left: 8px; }
.tab span { width: 137px; margin-left: 8px; overflow: hidden; white-space: nowrap; line-height: 20px; -webkit-mask-image: linear-gradient(90deg, #000 86%, transparent); mask-image: linear-gradient(90deg, #000 86%, transparent); }
.tab > svg:last-child { margin-left: 13px; }
.t1 { width: 209px; padding-left: 11px; position: relative; }
.t1::after { content: ""; position: absolute; right: 1px; top: 6px; width: 2px; height: 16px; background: #cfb4f8; }
.t1 span { letter-spacing: -.1px; }
.t2 { width: 212px; padding-left: 11px; }
.active { width: 202px; background: #fdf8ff; border-radius: 9px 9px 0 0; color: #1d1b20; position: relative; }
.active::before, .active::after { content: ""; position: absolute; bottom: 0; width: 9px; height: 9px; }
.active::before { left: -9px; background: radial-gradient(circle at 0 0, #ebdef8 8.500px, #fdf8ff 9px); }
.active::after { right: -9px; background: radial-gradient(circle at 100% 0, #ebdef8 8.500px, #fdf8ff 9px); }
.active span { letter-spacing: -.08px; }
.plus { margin-left: 14px; }
.tabmenu { width: 28px; height: 28px; border-radius: 8px; background: #f6ecfd; display: grid; place-items: center; margin-left: auto; margin-right: 6px; }
.addressbar { height: 47px; background: #fdf8ff; border-bottom: 1px solid #e4dde9; display: flex; align-items: center; padding-left: 15px; flex: none; }
.nav-fwd { margin-left: 22px; } .nav-reload { margin-left: 22px; }
.url { width: 1174px; height: 34px; border-radius: 17px; background: #ece6ef; margin-left: 19px; display: flex; align-items: center; padding-left: 5px; }
.siteinfo { width: 24px; height: 24px; border-radius: 50%; background: #fdf8ff; display: grid; place-items: center; }
.address { width: 1105px; margin-left: 8px; margin-top: -1px; font: 400 14px Inter, sans-serif; letter-spacing: -.077px; color: #4a4453; white-space: nowrap; }
.address em { color: #1d1b20; }
.ext { margin-left: 18px; } .vbar { width: 2px; height: 16px; background: #e8d9fa; margin-left: 16px; }
.avatar { margin-left: 16px; } .kebab { margin-left: 24px; }

/* Studio header */
.azure-header { height: 40px; background: #1978d7; color: #fff; display: flex; align-items: center; flex: none; padding-left: 16px; }
.brand { width: 895px; font-size: 13.500px; font-weight: 500; white-space: nowrap; }
.tools { display: grid; grid-template-columns: repeat(6, 40.6px); fill: none; stroke: #fff; width: 239px; margin-left: 1px; margin-right: -1px; }
.workspace { border-left: 1px solid #b5d3f1; height: 24px; padding-left: 12px; width: 215px; display: flex; flex-direction: column; justify-content: center; white-space: nowrap; line-height: 20px; letter-spacing: .08px; }
.workspace b { font-size: 11.500px; font-weight: 700; letter-spacing: -.15px; padding-top: 1px; margin-bottom: -1px; }
.user { border-left: 1px solid #d5e5f6; height: 24px; margin-left: 12px; padding-left: 8px; display: flex; align-items: center; }
.user span { width: 24px; height: 24px; border-radius: 50%; background: #4f6bed; color: #10123a; font-size: 10px; font-weight: 700; display: grid; place-items: center; }

.body { flex: 1; display: flex; min-height: 0; }
.sidebar { width: 213px; background: #fff; flex: none; }
.burger { margin: 11px 0 10px 20px; }
.item { height: 36px; display: flex; align-items: center; padding-left: 17px; white-space: nowrap; letter-spacing: .08px; }
.item svg { width: 16px; height: 16px; margin-right: 10px; fill: none; stroke: #444; stroke-width: 1; }
.item.catalog svg { width: 17px; margin-right: 8px; }
.catalog { letter-spacing: .3px; }
.gap { height: 15px; }
h4 { margin: 0 0 3px; height: 50px; line-height: 50px; padding-left: 16px; font-size: 13px; font-weight: 600; color: #1b1b1b; letter-spacing: .15px; }
.current { background: #f7f7f7; padding-left: 5px; font-weight: 600; }
.current::before { content: ""; width: 4px; height: 16px; border-radius: 2px; background: #0b5cd8; margin-right: 8px; }
.item.current svg { stroke: #1a6bc4; }
.vscroll { width: 15px; border-left: 1px solid #e3e3e3; border-right: 1px solid #d9d9d9; background: #fafafa; padding: 3px 0 0 3px; flex: none; }
.vscroll i { display: block; width: 8px; height: 516px; border-radius: 4px; background: #c1c1c1; }

main { flex: 1; padding: 0 8px; min-width: 0; letter-spacing: .05px; }
a { color: #1c5fe0; }
.item { color: #1b1b1b; }
.crumbs { height: 32px; display: flex; align-items: center; padding-left: 12px; color: #1b1b1b; white-space: nowrap; }
.crumbs svg { color: #888; }
.crumbs a { width: 165px; } .crumbs a.c2 { width: 219px; }
.crumbs svg + a { margin-left: 13px; } .crumbs svg + span { margin-left: 13px; }
h1 { margin: 0; height: 58px; line-height: 56px; padding-left: 12px; font-size: 22px; font-weight: 600; color: #111; }
.pivots { height: 53px; display: grid; grid-template-columns: 99px 104px 212px 177px 200px; padding-left: 10px; margin-bottom: 28px; color: #1b1b1b; }
.pivot { line-height: 53px; display: flex; align-items: center; white-space: nowrap; position: relative; }
.pivots .on { font-weight: 600; color: #111; letter-spacing: -.03px; }
.on::after { content: ""; position: absolute; left: -1px; width: 74px; bottom: 5px; height: 2px; background: #0b5cd8; }
.pill { border: 1px solid #616161; border-radius: 9px; height: 16px; width: 62px; line-height: 15px; font-size: 9px; font-weight: 600; color: #616161; text-align: center; margin-left: 4px; margin-top: 1px; letter-spacing: .1px; }
.grey { background: #ebebeb; border-color: #ebebeb; width: 66px; margin-left: 2px; }
.wide { width: 66px; margin-left: 2px; }
.desc { padding-left: 10px; height: 67px; line-height: 20px; white-space: nowrap; color: #111; }
.l1 { letter-spacing: .086px; } .l2 { letter-spacing: .105px; }
.l3 { display: flex; align-items: center; padding-top: 2px; }
.l3 a { margin-left: 3px; } .l3 svg { margin-left: 5px; }

.commands { height: 44px; background: #fff; border-radius: 4px; box-shadow: 0 1px 3px rgba(0,0,0,.22); display: flex; align-items: center; padding-left: 12px; white-space: nowrap; }
.create { width: 96px; height: 32px; border: 0; border-radius: 3px; background: #166dbd; color: #fff; font: 600 13px "Open Sans", sans-serif; display: flex; align-items: center; gap: 8px; padding: 0 0 0 16px; }
.cmd { display: flex; align-items: center; font-weight: 600; color: #424242; letter-spacing: -.03px; }
.cmd svg { margin-right: 8px; }
.refresh { width: 99px; margin-left: 15px; } .archive { width: 100px; color: #bdbdbd; } .archive svg, .reset svg { margin-right: 7px; } .reset { width: 333px; }
.toggles { display: flex; align-items: center; letter-spacing: .12px; }
.toggles span { margin-left: 8px; } .toggles .g1 { width: 165px; } .toggles .g2 { width: 117px; }
.toggle { width: 40px; height: 20px; border-radius: 10px; border: 1px solid #555; display: flex; align-items: center; padding: 0 3px; flex: none; }
.toggle::before { content: ""; width: 12px; height: 12px; border-radius: 50%; background: #333; }
.checked { background: #0b5cd8; border-color: #0b5cd8; justify-content: flex-end; }
.checked::before { background: #fff; }

.grid { margin-top: 10px; height: 371px; background: #fff; border-radius: 8px; box-shadow: 0 1px 3px rgba(0,0,0,.22); padding: 12px 0 0 10px; overflow: hidden; display: flex; flex-direction: column; }
.gridtop { display: flex; align-items: center; height: 32px; font-weight: 600; color: #424242; flex: none; }
.search { width: 194px; height: 32px; border-radius: 4px; background: #f4f4f4; display: flex; align-items: center; gap: 12px; padding-left: 13px; font-weight: 400; color: #707070; }
.filter { display: flex; align-items: center; gap: 8px; margin-left: 793px; width: 88px; }
.columns { display: flex; align-items: center; gap: 6px; }
.scroller { height: 263px; overflow: hidden; border-bottom: 1px solid #e5e5e5; flex: none; }
.row { height: 45px; display: grid; grid-template-columns: 220px 46px 220px 70px 170px 170px 100px 100px 120px; padding-left: 60px; padding-bottom: 2px; align-items: center; border-bottom: 1px solid #efefef; white-space: nowrap; width: 1300px; color: #424242; }
.head { height: 52px; padding-top: 7px; font-weight: 600; color: #242424; border-color: #e0e0e0; padding-bottom: 0; letter-spacing: 0; }
.row .date { letter-spacing: .21px; } .head .mod { letter-spacing: .25px; }
.head > span:nth-child(2) { padding-left: 2px; }
.head span { display: flex; align-items: center; }
.sort { margin-left: 6px; margin-top: 2px; }
.hscroll { height: 15px; background: #fafafa; border-bottom: 1px solid #e5e5e5; padding: 3px; flex: none; }
.hscroll i { display: block; width: 917px; height: 8px; border-radius: 4px; background: #c1c1c1; }
.pager { flex: 1; display: flex; align-items: center; padding-left: 459px; padding-top: 2px; color: #b5b5b5; font-weight: 500; }
.prev { width: 101px; display: flex; align-items: center; gap: 13px; }
.next { width: 86px; display: flex; align-items: center; gap: 12px; }
.select { width: 88px; height: 32px; border: 1px solid #c7c7c7; border-radius: 2px; background: #fff; color: #1b1b1b; display: flex; align-items: center; justify-content: space-between; padding: 0 7px; font-weight: 400; letter-spacing: .25px; }

/* Floating label and pointer */
.tip { position: absolute; left: 849px; top: 799px; width: 100px; height: 26px; border-radius: 5px; background: #e4e2e9; box-shadow: 0 0 2px rgba(0,0,0,.35); font: 400 13.700px/26px Inter, sans-serif; color: #222; text-align: center; }
.tip::after { content: ""; position: absolute; left: 43px; top: 25px; border: 7px solid transparent; border-top: 9px solid #e4e2e9; border-bottom: 0; }
.cursor { position: absolute; left: 876px; top: 789px; }

/* Dock */
.dock {
  position: absolute; left: 35px; top: 842px; width: 1370px; height: 53px; border-radius: 14px;
  border: 1px solid #8d7fae; display: flex; padding: 0 2px;
  background: linear-gradient(90deg, #62587f 0, #62587f 35%, #6b5a95 50%, #7b60a4 60%, #9766c2 68%, #9263bc 80%, #66598b 92%, #62577f 100%);
  box-shadow: 0 0 0 1px #120825;
}
.app { width: 44.150px; height: 51px; display: flex; justify-content: center; padding-top: 7px; position: relative; flex: none; }
.app svg { width: 34px; height: 34px; overflow: visible; }
.app .tall { height: 40px; margin-top: -3px; } .app .wide { width: 42px; margin-left: -2px; }
.run::after { content: ""; position: absolute; left: 20px; top: 46px; width: 4px; height: 4px; border-radius: 50%; background: #130a20; }
.badge { position: absolute; right: 0; top: 3px; width: 16px; height: 16px; border-radius: 50%; background: #e6412f; color: #fff; font: 400 8px/16px Inter, sans-serif; text-align: center; }
.dock-sep { width: 1px; height: 39px; background: #4d3670; margin: 6px 9px 0 10px; flex: none; }
.second { margin: 6px 8px 0 10px; }
.app text { font-family: Inter, sans-serif; text-anchor: middle; }
.app .cal-m { font-size: 6.500px; font-weight: 600; fill: #fff; } .app .cal-d { font-size: 20px; fill: #222; }
.app .tv { font-size: 14px; fill: #fff; text-anchor: start; }
.app .notion { font: 700 19px "Liberation Serif", serif; fill: #111; }
.app .letter { font-size: 10px; font-weight: 700; fill: #fff; }
.app .zoom { font-size: 8.500px; font-weight: 700; fill: #fff; }
.app .csv { font-size: 5px; fill: #555; }
```
